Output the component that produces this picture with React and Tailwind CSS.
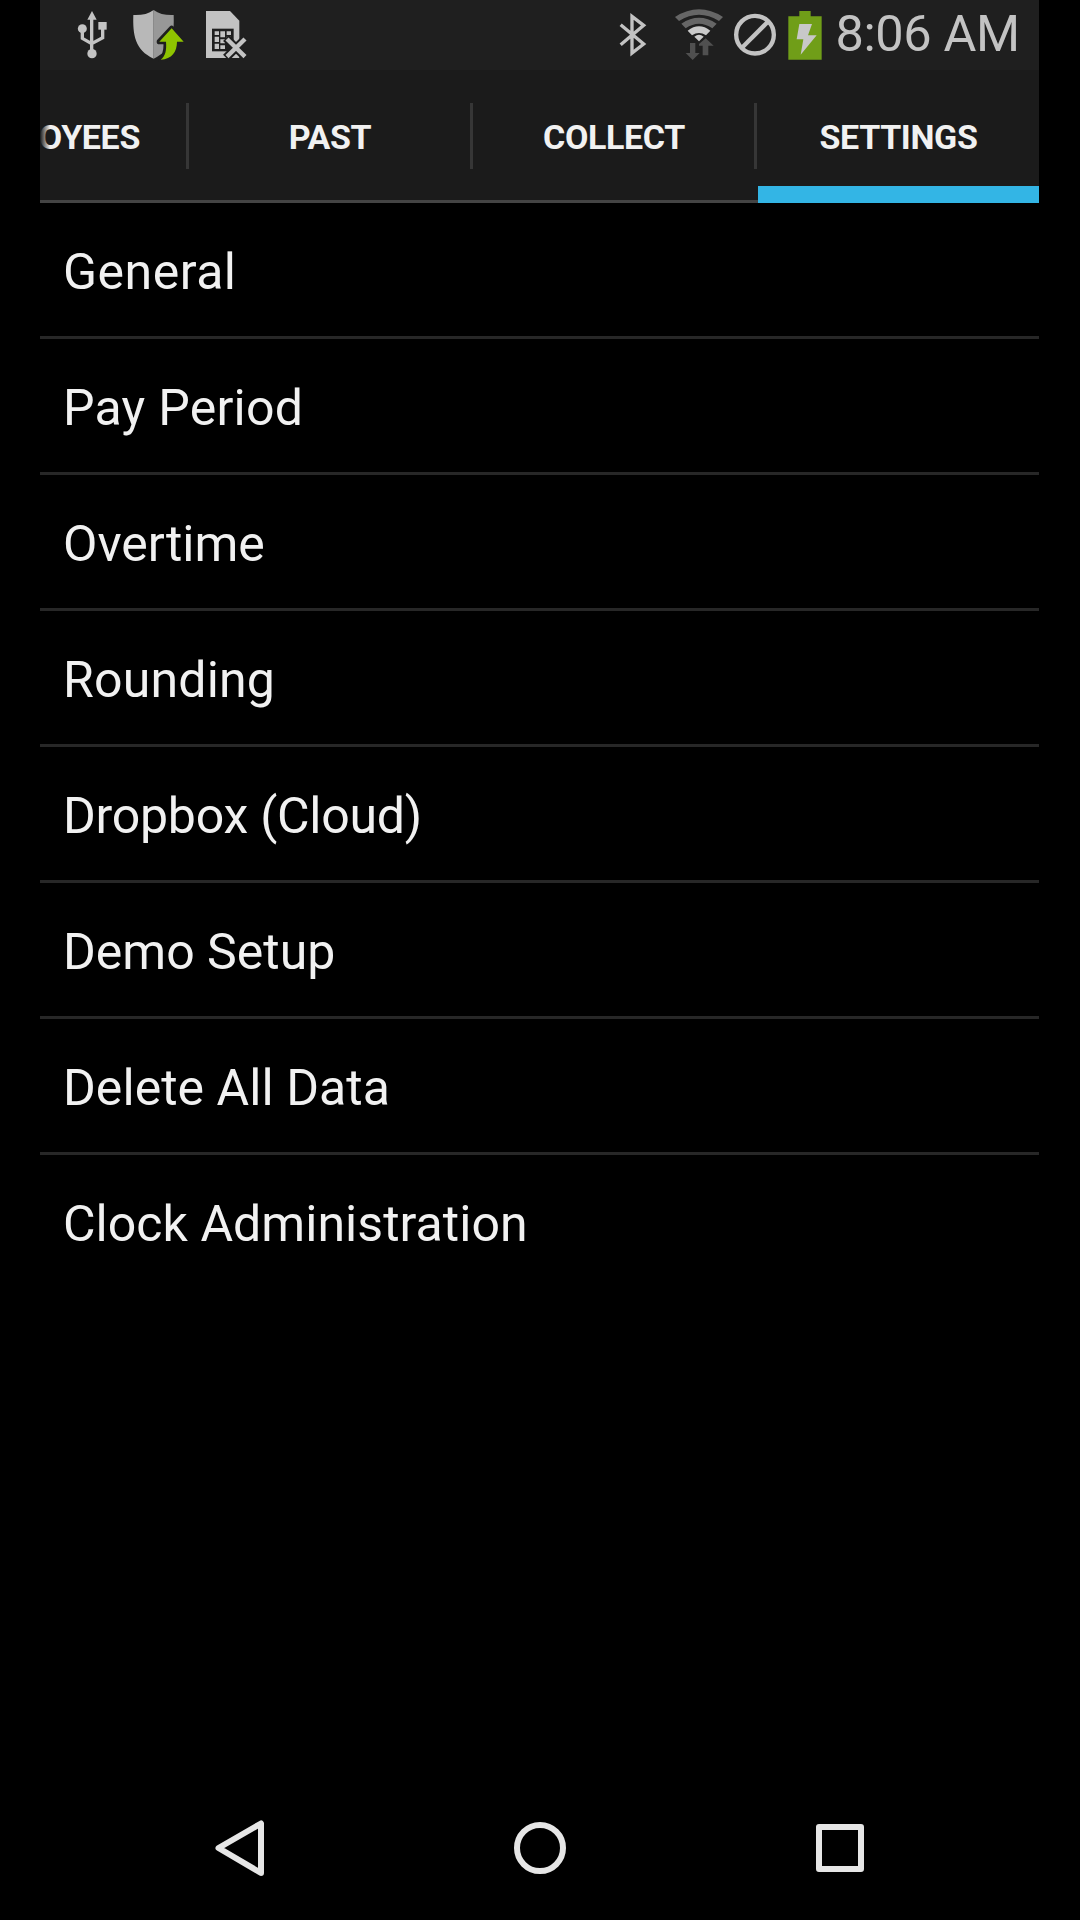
const GREY = '#c3c3c3';

function UsbIcon() {
  return (
    <svg className="h-[54px] w-[35px] shrink-0" viewBox="135 24 105 162" fill="none" stroke={GREY} strokeWidth="10">
      <path d="M185 50V160M157 90V115L185 131L218 113V80" />
      <path d="M186 33L200 59H172Z" fill={GREY} stroke="none" />
      <circle cx="157" cy="86" r="13.5" fill={GREY} stroke="none" />
      <circle cx="186" cy="161" r="14" fill={GREY} stroke="none" />
      <path d="M205 66H230V89H205Z" fill={GREY} stroke="none" />
    </svg>
  );
}

function ShieldIcon() {
  return (
    <svg className="h-[54px] w-[55px] shrink-0" viewBox="300 24 165 162">
      <path d="M371 30C355 42 335 46 310 45C308 105 315 150 371 176Z" fill="#b8b8b8" />
      <path d="M371 30C387 42 407 46 431 45C433 105 427 150 371 176Z" fill="#989898" />
      <path
        d="M425 85L461 125H441C441 155 426 177 392 179C407 167 410 150 408 125H388Z"
        fill="#8fc400"
        stroke="#1f1f1f"
        strokeWidth="16"
        strokeLinejoin="round"
        paintOrder="stroke"
      />
    </svg>
  );
}

function SimIcon() {
  return (
    <svg className="h-[54px] w-[44px] shrink-0" viewBox="522 24 132 162">
      <path d="M528 33H600L628 62V174H528Z" fill={GREY} />
      <path d="M546 86H611V154H546Z" fill="#1f1f1f" />
      <path
        d="M554 94H567V105H554ZM571 94H585V112H571ZM590 94H603V105H590ZM554 110H567V126H554ZM571 118H585V130H571ZM590 110H603V126H590ZM554 131H567V147H554ZM571 136H585V147H571Z"
        fill={GREY}
      />
      <path d="M588 114L648 173M648 114L588 173" stroke="#1f1f1f" strokeWidth="25" />
      <path d="M591 117L645 170M645 117L591 170" stroke={GREY} strokeWidth="13" />
    </svg>
  );
}

function BluetoothIcon() {
  return (
    <svg className="h-[54px] w-[30px] shrink-0" viewBox="54 24 90 162" fill="none" stroke={GREY} strokeWidth="10">
      <path d="M62 74L131 132L96 159V49L131 76L62 134" />
    </svg>
  );
}

function WifiIcon() {
  return (
    <svg className="h-[54px] w-[52px] shrink-0" viewBox="219 24 156 162" fill="none">
      <path d="M225 51Q297 5 369 51L357 63Q297 26 237 63Z" fill="#666666" />
      <path d="M244 71Q297 36 350 71L337 85Q297 58 257 85Z" fill="#666666" />
      <path d="M263 92Q297 66 331 92L318 106Q297 92 276 106Z" fill="#cacaca" />
      <path d="M283 110Q297 98 311 110L297 124Z" fill="#cacaca" />
      <path d="M270 129H286V159H299L278 180L257 159H270ZM317 115L341 137H325V166H308V137H297V132Z" fill="#505050" />
    </svg>
  );
}

function BlockedIcon() {
  return (
    <svg className="h-[54px] w-[46px] shrink-0" viewBox="396 24 138 162" fill="none" stroke={GREY} strokeWidth="13">
      <circle cx="465" cy="104" r="56.5" />
      <path d="M425 144L506 63" />
    </svg>
  );
}

function BatteryIcon() {
  return (
    <svg className="h-[54px] w-[36px] shrink-0" viewBox="561 24 108 162">
      <path d="M565 49H598V33H632V49H665V179H565Z" fill="#709e18" />
      <path d="M598 72H636L624 106H650L602 164L610 118H590Z" fill="#c8c8c8" />
    </svg>
  );
}

function StatusBar() {
  return (
    <div className="flex h-[70px] items-start justify-between bg-[#1f1f1f] pt-2">
      <div className="flex pl-[35px]">
        <UsbIcon />
        <div className="w-5" />
        <ShieldIcon />
        <div className="w-[19px]" />
        <SimIcon />
      </div>
      <div className="flex pr-[17px]">
        <BluetoothIcon />
        <div className="w-[25px]" />
        <WifiIcon />
        <div className="w-[7px]" />
        <BlockedIcon />
        <div className="w-[9px]" />
        <BatteryIcon />
        <div className="w-[199px] whitespace-nowrap pl-[12.5px] text-[50.5px] leading-[52px] tracking-[-0.4px] text-[#c3c3c3]">
          8:06 AM
        </div>
      </div>
    </div>
  );
}

function Tab({ label, active }) {
  return (
    <div className={active ? 'flex w-[281px] shrink-0 flex-col' : 'flex w-[284px] shrink-0 flex-col'}>
      <div className={active ? 'relative flex h-[116px] items-center justify-center pt-[18px]' : 'relative flex h-[116px] items-center justify-center pr-1 pt-[18px]'}>
        <span className="text-[34px] font-bold leading-[40px] tracking-[-0.35px] text-[#f1f1f1]">{label}</span>
        {!active && <div className="absolute right-px top-[33px] h-[66px] w-[3px] bg-[#363636]" />}
      </div>
      {active ? (
        <div className="h-[17px] bg-[#33b5e5]" />
      ) : (
        <div className="mt-[13.5px] h-[3px] bg-[#444444]" />
      )}
    </div>
  );
}

const ITEMS = [
  ['General', 'tracking-[0.5px]'],
  ['Pay Period', 'tracking-[0.25px]'],
  ['Overtime', 'tracking-normal'],
  ['Rounding', 'tracking-[0.2px]'],
  ['Dropbox (Cloud)', 'tracking-[-0.25px]'],
  ['Demo Setup', 'tracking-normal'],
  ['Delete All Data', 'tracking-[0.05px]'],
  ['Clock Administration', 'tracking-[0.05px]'],
];

export default function App() {
  return (
    <div className="flex h-[1920px] w-[1080px] flex-col overflow-hidden bg-black font-['Roboto',sans-serif]">
      <div className="ml-10 flex w-[999px] flex-col">
        <StatusBar />
        <div className="relative flex h-[133px] justify-end overflow-hidden bg-[#1b1b1b]">
          <Tab label="EMPLOYEES" />
          <Tab label="PAST" />
          <Tab label="COLLECT" />
          <Tab label="SETTINGS" active />
          <div className="absolute left-0 top-[40px] h-[60px] w-[10px] bg-gradient-to-r from-[#1b1b1b] to-transparent" />
        </div>
        <ul className="flex flex-col">
          {ITEMS.map(([item, tracking]) => (
            <li
              key={item}
              className="flex h-[136px] items-center border-b-[3px] border-[#272727] pl-[23px] pt-[5px] text-[50px] leading-[60px] text-[#f1f1f1] last:border-transparent"
            >
              <span className={tracking}>{item}</span>
            </li>
          ))}
        </ul>
      </div>
      <div className="mt-auto flex h-[144px] items-center justify-center gap-[200px]">
        <svg className="h-[100px] w-[100px]" viewBox="0 0 100 100" fill="none" stroke="#e6e6e6" strokeWidth="6" strokeLinejoin="round">
          <path d="M71 25.500V75L28.500 50Z" />
        </svg>
        <svg className="h-[100px] w-[100px]" viewBox="0 0 100 100" fill="none" stroke="#e6e6e6" strokeWidth="6">
          <circle cx="50" cy="50" r="23" />
        </svg>
        <svg className="h-[100px] w-[100px]" viewBox="0 0 100 100" fill="none" stroke="#e6e6e6" strokeWidth="6" strokeLinejoin="round">
          <path d="M29 29H71V71H29Z" />
        </svg>
      </div>
    </div>
  );
}
